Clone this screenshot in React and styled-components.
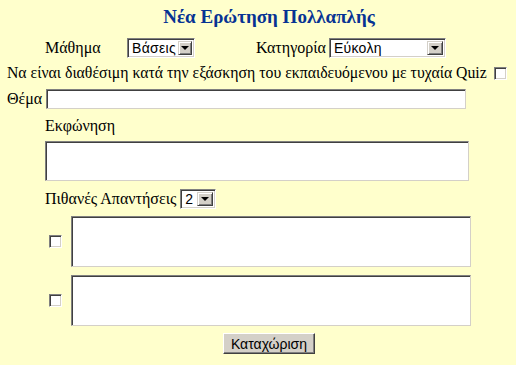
import React from 'react';
import styled, { createGlobalStyle } from 'styled-components';

const GlobalStyle = createGlobalStyle`
  html, body {
    margin: 0;
    padding: 0;
    background: #ffffcc;
  }
  body {
    font-family: "Liberation Serif", "DejaVu Serif", serif;
    font-size: 16px;
    color: #000;
  }
`;

const Page = styled.div`
  width: 516px;
  height: 365px;
  background: #ffffcc;
  padding: 6px 0 0 7px;
  box-sizing: border-box;
`;

const Title = styled.h1`
  margin: 0 0 9px 0;
  width: 502px;
  padding-left: 22px;
  box-sizing: border-box;
  text-align: center;
  font-size: 19px;
  font-weight: bold;
  color: #073393;
  line-height: 22px;
`;

const Row = styled.div`
  display: flex;
  align-items: center;
  height: ${p => p.h || 26}px;
`;

const Label = styled.span`
  display: inline-block;
  width: ${p => (p.w ? p.w + 'px' : 'auto')};
  margin-right: ${p => p.mr || 0}px;
  white-space: nowrap;
  font-size: ${p => p.fs || 16}px;
`;

const SelectBox = styled.div`
  display: flex;
  align-items: stretch;
  width: ${p => p.w}px;
  height: 20px;
  box-sizing: border-box;
  border-top: 1px solid #808080;
  border-left: 1px solid #808080;
  border-right: 1px solid #ffffff;
  border-bottom: 1px solid #ffffff;
  box-shadow: inset 1px 1px 0 #404040, inset -1px -1px 0 #d4d0c8;
  background: #fff;
  font-family: "Liberation Sans", Arial, sans-serif;
  font-size: 14px;
`;

const SelectText = styled.span`
  flex: 1;
  padding: 1px 0 0 4px;
  line-height: 16px;
  letter-spacing: 0.3px;
`;

const ArrowButton = styled.span`
  width: 16px;
  margin: 2px;
  background: #d4d0c8;
  box-sizing: border-box;
  border-top: 1px solid #d4d0c8;
  border-left: 1px solid #d4d0c8;
  border-right: 1px solid #404040;
  border-bottom: 1px solid #404040;
  box-shadow: inset 1px 1px 0 #ffffff, inset -1px -1px 0 #808080;
  display: flex;
  align-items: center;
  justify-content: center;
  &::after {
    content: '';
    border-left: 4px solid transparent;
    border-right: 4px solid transparent;
    border-top: 4px solid #000;
  }
`;

const Check = styled.span`
  display: inline-block;
  width: 13px;
  height: 13px;
  box-sizing: border-box;
  background: #fff;
  border-top: 1px solid #808080;
  border-left: 1px solid #808080;
  border-right: 1px solid #ffffff;
  border-bottom: 1px solid #ffffff;
  box-shadow: inset 1px 1px 0 #404040, inset -1px -1px 0 #d4d0c8;
  margin-left: ${p => p.ml || 0}px;
`;

const Field = styled.div`
  width: ${p => p.w}px;
  height: ${p => p.h}px;
  box-sizing: border-box;
  background: #fff;
  border-top: 1px solid #808080;
  border-left: 1px solid #808080;
  border-right: 1px solid #d4d0c8;
  border-bottom: 1px solid #d4d0c8;
  box-shadow: inset 1px 1px 0 #404040;
  margin-left: ${p => p.ml || 0}px;
`;

const Block = styled.div`
  padding-left: 38px;
`;

const AnswerRow = styled.div`
  display: flex;
  align-items: center;
  padding-left: 42px;
  margin-top: ${p => p.mt || 0}px;
`;

const Footer = styled.div`
  display: flex;
  padding-left: 216px;
  margin-top: 7px;
`;

const Button = styled.button`
  width: 92px;
  height: 21px;
  padding: 0;
  background: #d4d0c8;
  font-family: "Liberation Sans", Arial, sans-serif;
  font-size: 14px;
  color: #000;
  border-top: 1px solid #ffffff;
  border-left: 1px solid #ffffff;
  border-right: 1px solid #404040;
  border-bottom: 1px solid #404040;
  box-shadow: inset -1px -1px 0 #808080;
`;

export default function App() {
  return (
    <Page>
      <GlobalStyle />
      <Title>Νέα Ερώτηση Πολλαπλής</Title>
      <Row h={22}>
        <Label w={82} style={{ paddingLeft: 38 }}>Μάθημα</Label>
        <SelectBox w={68}>
          <SelectText>Βάσεις</SelectText>
          <ArrowButton />
        </SelectBox>
        <Label style={{ marginLeft: 61, marginRight: 3 }}>Κατηγορία</Label>
        <SelectBox w={117}>
          <SelectText>Εύκολη</SelectText>
          <ArrowButton />
        </SelectBox>
      </Row>
      <Row h={28}>
        <Label fs={15.75}>Να είναι διαθέσιμη κατά την εξάσκηση του εκπαιδευόμενου με τυχαία Quiz</Label>
        <Check ml={7} />
      </Row>
      <Row h={24}>
        <Label mr={4}>Θέμα</Label>
        <Field w={420} h={20} />
      </Row>
      <Block>
        <Row h={30}>
          <Label>Εκφώνηση</Label>
        </Row>
        <Field w={424} h={40} />
        <Row h={35}>
          <Label mr={4}>Πιθανές Απαντήσεις</Label>
          <SelectBox w={36}>
            <SelectText>2</SelectText>
            <ArrowButton />
          </SelectBox>
        </Row>
      </Block>
      <AnswerRow>
        <Check />
        <Field w={400} h={51} ml={9} />
      </AnswerRow>
      <AnswerRow mt={8}>
        <Check />
        <Field w={400} h={51} ml={9} />
      </AnswerRow>
      <Footer>
        <Button>Καταχώριση</Button>
      </Footer>
    </Page>
  );
}
